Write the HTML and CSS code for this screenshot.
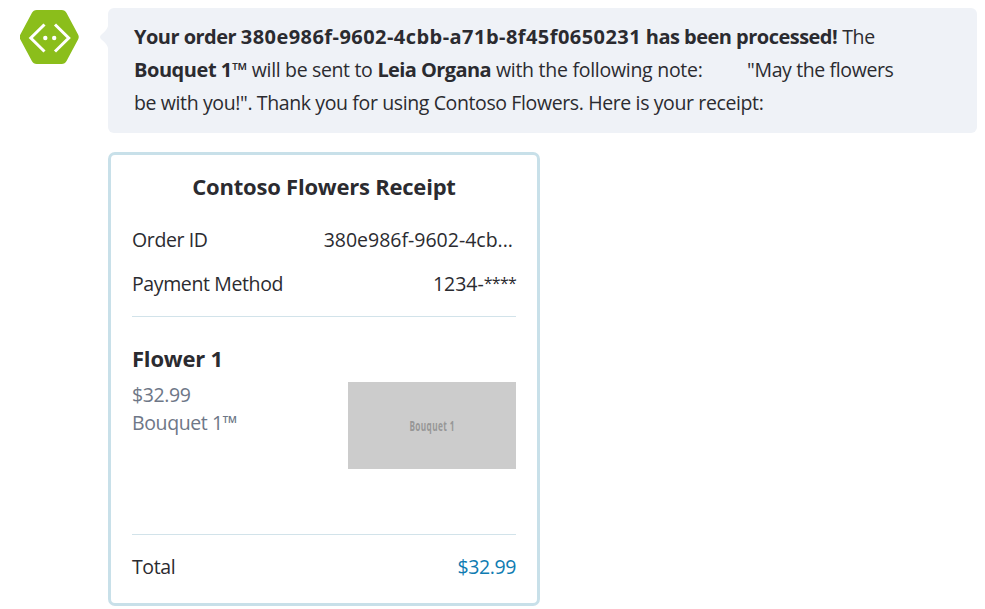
FILE: index.html
```
<!DOCTYPE html>
<html lang="en">
<head>
<meta charset="utf-8">
<title>Contoso Flowers</title>
<link rel="stylesheet" href="styles.css">
</head>
<body>
<main class="chat">
  <svg class="avatar" viewBox="0 0 60 56" aria-hidden="true">
    <path d="M17 6H42L53.500 27.500L42 49H17L5.500 27.500Z" fill="#8bbe1b" stroke="#8bbe1b" stroke-width="11" stroke-linejoin="round" transform="translate(-.3 .5)"/>
    <path d="M24.500 15.500L10.800 29L24.500 42.500M35 15.500L48.700 29L35 42.500" fill="none" stroke="#fff" stroke-width="3"/>
    <circle cx="25.300" cy="29" r="2.200" fill="#fff"/><circle cx="34.200" cy="29" r="2.200" fill="#fff"/>
  </svg>
  <div class="messages">
    <section class="bubble">
      <svg class="tail" viewBox="0 0 8 22" aria-hidden="true"><path d="M8 0Q7 4 2 8Q-2 11 2 14Q7 18 8 22Z" fill="#eff2f7"/></svg>
      <p class="line"><b class="l1">Your order <span class="order-id">380e986f-9602-4cbb-a71b-8f45f0650231</span> has been processed!</b><span class="the">The</span></p>
      <p class="line"><b class="l2">Bouquet 1™</b><span class="sent">will be sent to</span><b class="name">Leia Organa</b><span class="note">with the following note:</span><span class="quote">"May the flowers</span></p>
      <p class="line"><span>be with you!". Thank you for using Contoso Flowers. Here is your receipt:</span></p>
    </section>
    <section class="receipt">
      <h1>Contoso Flowers Receipt</h1>
      <div class="row"><span>Order ID</span><span class="order">380e986f-9602-4cb...</span></div>
      <div class="row"><span>Payment Method</span><span class="card">1234-<span class="mask">****</span></span></div>
      <div class="item">
        <div class="info">
          <h2>Flower 1</h2>
          <p>$32.99</p>
          <p>Bouquet 1™</p>
        </div>
        <div class="photo"><span>Bouquet 1</span></div>
      </div>
      <div class="row total"><span>Total</span><span class="amount">$32.99</span></div>
    </section>
  </div>
</main>
</body>
</html>
```
FILE: styles.css
```
* { box-sizing: border-box; }
body { margin: 0; background: #fff; color: #2b2b30; font: 19.5px/33px "Open Sans", "Noto Sans", sans-serif; letter-spacing: -.38px; }
h1, h2, p { margin: 0; }
.chat { display: flex; padding: 8px 8px 0 20px; }
.avatar { width: 60px; height: 56px; margin-top: 1px; flex: none; }
.messages { margin-left: 28px; flex: 1; }
.bubble { position: relative; height: 125px; padding: 12px 26px; background: #eff2f7; border-radius: 6px; }
.tail { position: absolute; left: -8px; top: 18px; width: 8px; height: 22px; }
.line { display: flex; height: 33px; line-height: 34px; white-space: nowrap; }
.line b { font-size: 20px; }
.l1 { letter-spacing: -.52px; }
.order-id { letter-spacing: .45px; }
.the { margin-left: 5px; }
.l2 { letter-spacing: -.45px; }
.sent { margin-left: 5px; letter-spacing: -.35px; }
.name { margin-left: 5px; letter-spacing: -.6px; }
.note { margin-left: 5px; letter-spacing: -.27px; }
.quote { margin-left: 44.5px; }
.receipt { width: 432px; height: 454px; margin-top: 19px; padding: 9px 21px; border: 3px solid #c8e0e9; border-radius: 7px; }
h1 { font-size: 22px; line-height: 44px; text-align: center; letter-spacing: -.22px; }
.row { display: flex; justify-content: space-between; height: 44px; line-height: 44px; white-space: nowrap; }
h1 + .row { margin-top: 10px; }
.order { margin-right: 3px; letter-spacing: 0; }
.card { letter-spacing: 0; }
.mask { font-size: 16px; line-height: 1; letter-spacing: -.75px; vertical-align: 2px; }
.item { display: flex; justify-content: space-between; height: 219px; margin-top: 10px; border-top: 1px solid #d2e3ea; border-bottom: 1px solid #d2e3ea; }
.info { padding-top: 24px; color: #6e7787; line-height: 28px; }
h2 { margin-bottom: 6px; color: #2b2b30; font-size: 22px; line-height: 34px; letter-spacing: -.2px; }
.photo { display: grid; place-items: center; width: 168px; height: 87px; margin-top: 65px; background: #ccc; color: #979797; font: bold 13.500px/16px "Open Sans", sans-serif; letter-spacing: .6px; }
.photo span { transform: scaleX(.61); }
.total { margin-top: 10px; }
.amount { color: #0f7cb2; }
```
